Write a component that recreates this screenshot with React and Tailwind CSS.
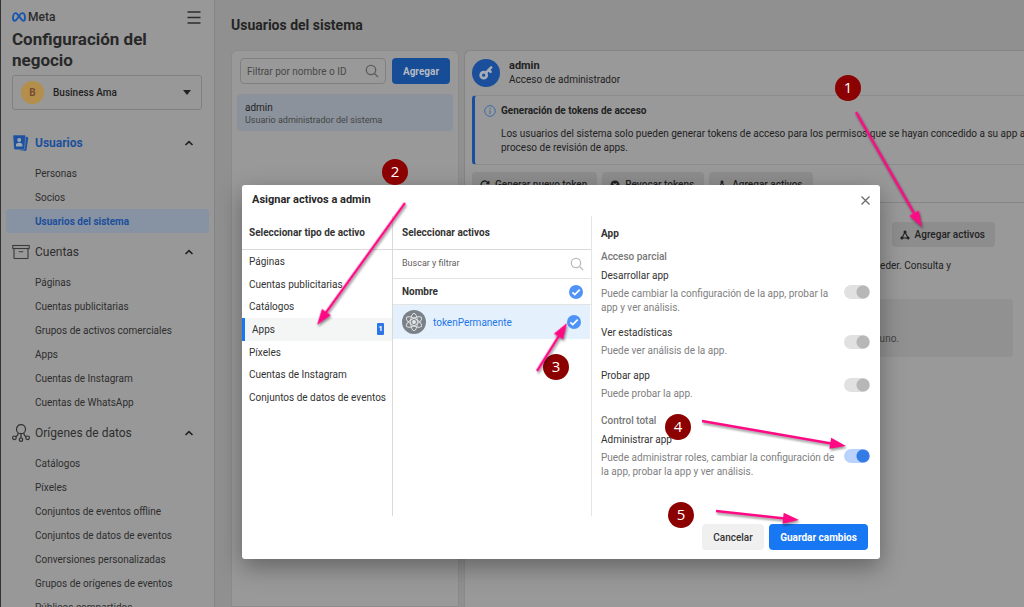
const MODAL_SHADOW = 'shadow-[0_8px_24px_rgba(0,0,0,0.35)]';

function MetaLogo() {
  return (
    <svg viewBox="0 0 14 10" className="h-[10px] w-[14px]" fill="none" stroke="#1a56b0" strokeWidth="1.9" aria-hidden="true">
      <path d="M7 4.6C5.8 2.4 4.8 1.1 3.6 1.1 2 1.1 1 3.6 1 6c0 1.6.6 2.7 1.7 2.7C4.2 8.7 5.4 6.4 7 3.900 8.200 2 9.200 1.100 10.400 1.100 12 1.100 13 3.600 13 6c0 1.600-.6 2.700-1.700 2.700C9.900 8.700 8.800 7 7 4.100" />
    </svg>
  );
}

function MenuIcon() {
  return (
    <svg viewBox="0 0 14 14" className="h-[14px] w-[14px]" stroke="#2c2c2c" strokeWidth="1.4" aria-hidden="true">
      <path d="M0.500 2h13M0.500 7.500h13M0.500 13h13" />
    </svg>
  );
}

function Chevron() {
  return (
    <svg viewBox="0 0 10 10" className="h-[10px] w-[10px]" fill="none" stroke="#222" strokeWidth="1.700" aria-hidden="true">
      <path d="M1.500 7 5 3.600 8.500 7" />
    </svg>
  );
}

function UsersIcon() {
  return (
    <svg viewBox="0 0 18 18" className="h-[18px] w-[18px]" aria-hidden="true">
      <path d="M13.500 2.800l1.700.3a1.200 1.200 0 0 1 1 1.400l-1.700 11.300a1.300 1.300 0 0 1-1.500 1.100L7 16z" fill="#1c52a0" />
      <path d="M2 1h10.500a1.200 1.200 0 0 1 1.200 1.400l-1.100 12.200a1.300 1.300 0 0 1-1.300 1.200H3.200A1.300 1.300 0 0 1 1.900 14.600L.9 2.300A1.200 1.200 0 0 1 2 1z" fill="#1c52a0" stroke="#989898" strokeWidth=".6" />
      <circle cx="7.200" cy="6" r="2" fill="#a0a6b0" />
      <path d="M4 12.500V11c0-1.300 1.300-2.200 3.200-2.200s3.200.9 3.200 2.200v1.500z" fill="#a0a6b0" />
    </svg>
  );
}

function BoxIcon() {
  return (
    <svg viewBox="0 0 18 16" className="h-[16px] w-[18px]" fill="none" stroke="#3a3a3a" strokeWidth="1.100" aria-hidden="true">
      <rect x=".8" y="1.500" width="16.400" height="3" />
      <path d="M2 4.500v9.400c0 .4.3.6.6.6h12.800c.3 0 .6-.2.6-.6V4.500M6.800 7.700h4.400" />
    </svg>
  );
}

function SourcesIcon() {
  return (
    <svg viewBox="0 0 18 18" className="h-[18px] w-[18px]" fill="none" stroke="#303030" strokeWidth="1.200" aria-hidden="true">
      <circle cx="9" cy="5.200" r="4.500" />
      <circle cx="2.400" cy="13.800" r="1.800" />
      <circle cx="9" cy="15.700" r="1.700" />
      <circle cx="15.600" cy="13.800" r="1.800" />
      <path d="M6.300 8.800C6 11.200 5 12.300 3.800 12.700M11.700 8.800c.3 2.400 1.300 3.500 2.500 3.900M9 9.700V14" />
    </svg>
  );
}

function SearchIcon({ className }) {
  return (
    <svg viewBox="0 0 14 14" className={'h-[14px] w-[14px] shrink-0 ' + className} fill="none" stroke="currentColor" strokeWidth="1.300" aria-hidden="true">
      <circle cx="6" cy="6" r="4.700" />
      <path d="M9.500 9.500 13 13" />
    </svg>
  );
}

function KeyIcon() {
  return (
    <svg viewBox="0 0 28 28" className="h-[28px] w-[28px] shrink-0" aria-hidden="true">
      <circle cx="14" cy="14" r="14" fill="#1b4f9c" />
      <circle cx="11.700" cy="16.200" r="3" fill="none" stroke="#a8adb5" strokeWidth="2.700" />
      <path d="M14 13.700 19.200 8.400M16.800 11.200l1.800 1.600" stroke="#a8adb5" strokeWidth="2.500" strokeLinecap="round" />
    </svg>
  );
}

function InfoIcon() {
  return (
    <svg viewBox="0 0 12 12" className="h-[12px] w-[12px] shrink-0" fill="none" stroke="#3e6ba8" aria-hidden="true">
      <circle cx="6" cy="6" r="5.300" strokeWidth="1" />
      <path d="M6 5.200V9M6 3v1.200" strokeWidth="1.100" />
    </svg>
  );
}

function AssetsIcon() {
  return (
    <svg viewBox="0 0 10 10" className="h-[10px] w-[10px]" fill="#222" stroke="#222" aria-hidden="true">
      <path d="M5 2 2 8h6z" fill="none" strokeWidth="1.100" />
      <circle cx="5" cy="2" r="1.100" />
      <circle cx="1.900" cy="8" r="1.100" />
      <circle cx="8.100" cy="8" r="1.100" />
    </svg>
  );
}

function RefreshIcon() {
  return (
    <svg viewBox="0 0 10 10" className="h-[10px] w-[10px]" fill="none" stroke="#222" strokeWidth="1.400" aria-hidden="true">
      <path d="M8.500 6.500A3.900 3.900 0 1 1 8.300 3M8.800 1v2.500H6.300" />
    </svg>
  );
}

function RevokeIcon() {
  return (
    <svg viewBox="0 0 10 10" className="h-[10px] w-[10px]" aria-hidden="true">
      <circle cx="5" cy="5" r="4.500" fill="#222" />
      <path d="M3.400 3.400l3.200 3.200M6.600 3.400 3.400 6.600" stroke="#999" strokeWidth="1.200" />
    </svg>
  );
}

function AtomIcon() {
  return (
    <svg viewBox="0 0 24 24" className="h-[24px] w-[24px] shrink-0" fill="none" aria-hidden="true">
      <circle cx="12" cy="12" r="12" fill="#7c8187" />
      <g stroke="#dcdfe2" strokeWidth="1">
        <ellipse cx="12" cy="12" rx="3.400" ry="8.700" />
        <ellipse cx="12" cy="12" rx="3.400" ry="8.700" transform="rotate(60 12 12)" />
        <ellipse cx="12" cy="12" rx="3.400" ry="8.700" transform="rotate(120 12 12)" />
      </g>
      <circle cx="12" cy="12" r="1.900" fill="#e8eaec" />
    </svg>
  );
}

const NAV = [
  {
    title: 'Usuarios', icon: UsersIcon, active: true, gap: 'mt-[21px]',
    items: ['Personas', 'Socios', 'Usuarios del sistema'],
  },
  {
    title: 'Cuentas', icon: BoxIcon, gap: 'mt-[7px]',
    items: ['Páginas', 'Cuentas publicitarias', 'Grupos de activos comerciales', 'Apps', 'Cuentas de Instagram', 'Cuentas de WhatsApp'],
  },
  {
    title: 'Orígenes de datos', icon: SourcesIcon, gap: 'mt-[7px]',
    items: ['Catálogos', 'Píxeles', 'Conjuntos de eventos offline', 'Conjuntos de datos de eventos', 'Conversiones personalizadas', 'Grupos de orígenes de eventos', 'Públicos compartidos'],
  },
];

function Sidebar() {
  return (
    <aside className="w-[215px] shrink-0 border-r border-l border-r-[#848484] border-l-[#333] bg-[#989898]">
      <header className="px-[11px] pt-[10px]">
        <div className="flex items-center justify-between pr-[2px]">
          <div className="flex items-center gap-[2px] text-[12px] leading-[14px] font-medium text-[#2b2b2b]">
            <MetaLogo />
            Meta
          </div>
          <button type="button" aria-label="Menú"><MenuIcon /></button>
        </div>
        <h1 className="mt-[5px] w-[160px] text-[17px] leading-[21px] font-bold text-[#282828]">Configuración del negocio</h1>
        <button type="button" className="mt-[4px] flex h-[35px] w-[190px] items-center rounded-[3px] border border-[#808080] pr-[10px] pl-[8px] text-[10px] font-medium text-[#222]">
          <span className="flex h-[23px] w-[23px] items-center justify-center rounded-full bg-[#b48f4c] font-bold text-[#7a4a34]">B</span>
          <span className="ml-[9px]">Business Ama</span>
          <svg viewBox="0 0 8 5" className="ml-auto h-[5px] w-[8px]" fill="#222" aria-hidden="true"><path d="M0 0h8L4 5z" /></svg>
        </button>
      </header>
      <nav className="px-[5px]">
        {NAV.map(({ title, icon: Icon, active, gap, items }) => (
          <section key={title} className={gap}>
            <button type="button" className={'flex h-[24px] w-full items-center pr-[15px] pl-[6px] text-[12px] ' + (active ? 'font-bold text-[#1b4f9c]' : 'text-[#2e2e2e]')}>
              <span className="w-[23px]"><Icon /></span>
              {title}
              <span className="ml-auto"><Chevron /></span>
            </button>
            <ul className="mt-[6px]">
              {items.map((item) => {
                const on = item === 'Usuarios del sistema';
                return (
                  <li key={item}>
                    <a href="#" className={'flex h-[24px] items-center rounded-[4px] pl-[29px] text-[10px] ' + (on ? 'bg-[#8792a2] font-bold text-[#1b4f9c]' : 'text-[#2e2e2e]')}>{item}</a>
                  </li>
                );
              })}
            </ul>
          </section>
        ))}
      </nav>
    </aside>
  );
}

function GreyButton({ icon, children }) {
  return (
    <button type="button" className="flex h-[25px] shrink-0 items-center gap-[5px] rounded-[4px] bg-[#8d8d8d] pr-[10px] pl-[8px] text-[10px] font-medium text-[#222]">
      {icon}
      {children}
    </button>
  );
}

function UserList() {
  return (
    <section className="w-[228px] shrink-0 rounded-t-[6px] border border-[#8b8b8b] bg-[#999]">
      <div className="flex gap-[6px] px-[8px] pt-[7px]">
        <label className="flex h-[26px] w-[146px] items-center rounded-[4px] border border-[#808080] pr-[6px] pl-[6px] text-[#5c5c5c]">
          <input type="text" aria-label="Filtrar por nombre o ID" placeholder="Filtrar por nombre o ID" className="min-w-0 flex-1 bg-transparent text-[10px] outline-none placeholder:text-[#484848]" />
          <SearchIcon className="" />
        </label>
        <button type="button" className="h-[26px] flex-1 rounded-[4px] bg-[#174c97] text-[10px] font-bold text-[#b5bac2]">Agregar</button>
      </div>
      <div className="mx-[5px] mt-[10px] h-[37px] rounded-[4px] bg-[#8b929b] px-[8px] pt-[7px]">
        <p className="text-[10px] leading-[13px] text-[#222]">admin</p>
        <p className="text-[9px] leading-[12px] text-[#444]">Usuario administrador del sistema</p>
      </div>
    </section>
  );
}

function UserDetail() {
  return (
    <div className="min-w-0 flex-1">
      <section className="h-[153px] rounded-tl-[6px] border border-r-0 border-[#858585] bg-[#999] pl-[7px]">
        <div className="flex items-center gap-[9px] pt-[7px]">
          <KeyIcon />
          <div className="text-[#222]">
            <h3 className="text-[11px] leading-[15px] font-bold">admin</h3>
            <p className="text-[10px] leading-[14px]">Acceso de administrador</p>
          </div>
        </div>
        <div className="mt-[8px] h-[70px] rounded-l-[4px] border-y border-l-3 border-y-[#8c8c8c] border-l-[#1b4f9c] pl-[9px]">
          <div className="flex items-center gap-[5px] pt-[8px] text-[10px] leading-[14px] font-bold text-[#222]">
            <InfoIcon />
            <span>Generación de tokens de acceso</span>
          </div>
          <p className="mt-[9px] pl-[17px] text-[10px] leading-[14px] whitespace-nowrap text-[#222]">
            Los usuarios del sistema solo pueden generar tokens de acceso para los permisos que se hayan concedido a su app a través del
            <br />
            proceso de revisión de apps.
          </p>
        </div>
        <div className="mt-[7px] flex gap-[5px]">
          <GreyButton icon={<RefreshIcon />}>Generar nuevo token</GreyButton>
          <GreyButton icon={<RevokeIcon />}>Revocar tokens</GreyButton>
          <GreyButton icon={<AssetsIcon />}>Agregar activos</GreyButton>
        </div>
      </section>
      <section className="h-full border-l border-[#8b8b8b] bg-[#999] pt-[19px] pr-[11px]">
        <div className="flex justify-end pr-[18px]">
          <GreyButton icon={<AssetsIcon />}>Agregar activos</GreyButton>
        </div>
        <p className="mt-[12px] pr-[62px] text-right text-[10px] leading-[14px] text-[#222]">a los que puede acceder. Consulta y</p>
        <div className="mt-[26px] ml-[8px] h-[58px] rounded-[4px] bg-[#919191] pt-[33px] pr-[114px] text-right text-[10px] leading-[14px] text-[#444]">Aún no se asignó ninguno.</div>
      </section>
    </div>
  );
}

const TYPES = ['Páginas', 'Cuentas publicitarias', 'Catálogos', 'Apps', 'Píxeles', 'Cuentas de Instagram', 'Conjuntos de datos de eventos'];

function RoundCheck({ label }) {
  return (
    <span className="grid h-[14px] w-[14px] shrink-0">
      <input type="checkbox" defaultChecked aria-label={label} className="col-start-1 row-start-1 h-[14px] w-[14px] appearance-none rounded-full bg-[#4f93f8]" />
      <svg viewBox="0 0 14 14" className="pointer-events-none col-start-1 row-start-1 h-[14px] w-[14px]" fill="none" stroke="#fff" strokeWidth="1.700" aria-hidden="true">
        <path d="M3.400 7.300 5.800 9.600 10.700 4.700" />
      </svg>
    </span>
  );
}

function Permission({ id, title, text, on, className }) {
  return (
    <div className={'flex items-center justify-between ' + className}>
      <label htmlFor={id} className="w-[236px] text-[10px]">
        <span className="block leading-[14px] text-[#333]">{title}</span>
        <span className="mt-[4px] block leading-[14px] text-[#808080]">{text}</span>
      </label>
      <input
        id={id}
        type="checkbox"
        role="switch"
        defaultChecked={on}
        className={'h-[14px] w-[26px] shrink-0 appearance-none rounded-full ' + (on
          ? 'bg-[radial-gradient(circle_at_19px_7px,#357be6_6px,#b9d3fa_7px)]'
          : 'bg-[radial-gradient(circle_at_19px_7px,#b7b7b7_6px,#e1e1e1_7px)]')}
      />
    </div>
  );
}

function Dialog() {
  return (
    <div role="dialog" aria-labelledby="dialog-title" className={'flex h-[374px] w-[638px] flex-col rounded-[3px] bg-white ' + MODAL_SHADOW}>
      <header className="flex h-[31px] shrink-0 items-center justify-between pr-[9px] pl-[10px]">
        <h2 id="dialog-title" className="text-[11px] font-bold text-[#282828]">Asignar activos a admin</h2>
        <button type="button" aria-label="Cerrar">
          <svg viewBox="0 0 11 11" className="h-[11px] w-[11px]" stroke="#666" strokeWidth="1.200" aria-hidden="true"><path d="M1.500 1.500l8 8M9.500 1.500l-8 8" /></svg>
        </button>
      </header>
      <div className="flex h-[300px] shrink-0">
        <section className="w-[151px] shrink-0 border-r border-[#dadada]">
          <h3 className="flex h-[34px] items-center border-b border-[#dadada] pl-[7px] text-[10px] font-bold text-[#333]">Seleccionar tipo de activo</h3>
          <ul className="grid h-[159px] auto-rows-fr text-[10px] text-[#333]">
            {TYPES.map((type) => (
              <li key={type}>
                <button type="button" className={'flex h-full w-full items-center whitespace-nowrap ' + (type === 'Apps' ? 'border-l-3 border-[#1877f2] bg-[#f4f6f6] pr-[8px] pl-[7px]' : 'pl-[7px]')}>
                  {type}
                  {type === 'Apps' && <span className="ml-auto flex h-[12px] w-[7px] items-center justify-center rounded-[1px] bg-[#2c76e6] text-[8px] font-bold text-white">1</span>}
                </button>
              </li>
            ))}
          </ul>
        </section>
        <section className="w-[199px] shrink-0 border-r border-[#e4e4e4]">
          <h3 className="flex h-[34px] items-center border-b border-[#dadada] pl-[9px] text-[10px] font-bold text-[#333]">Seleccionar activos</h3>
          <label className="flex h-[29px] items-center border-b border-[#e4e4e4] pr-[7px] pl-[9px]">
            <input type="text" aria-label="Buscar y filtrar" placeholder="Buscar y filtrar" className="min-w-0 flex-1 text-[9px] outline-none placeholder:text-[#606060]" />
            <SearchIcon className="text-[#bbb]" />
          </label>
          <div className="flex h-[26px] items-center justify-between border-b border-[#e4e4e4] pr-[8px] pl-[9px] text-[10px] font-bold text-[#333]">
            Nombre
            <RoundCheck label="Seleccionar todo" />
          </div>
          <div className="mr-[1px] flex h-[34px] items-center bg-[#e5f0fd] pr-[9px] pl-[9px] text-[10px] text-[#2176ea]">
            <AtomIcon />
            <span className="mr-auto ml-[7px]">tokenPermanente</span>
            <RoundCheck label="tokenPermanente" />
          </div>
        </section>
        <section className="flex-1 pr-[10px] pl-[9px]">
          <h3 className="flex h-[34px] items-center text-[10px] font-bold text-[#333]">App</h3>
          <h4 className="text-[10px] leading-[14px] font-medium text-[#777]">Acceso parcial</h4>
          <Permission id="p-dev" className="mt-[5px]" title="Desarrollar app" text="Puede cambiar la configuración de la app, probar la app y ver análisis." />
          <Permission id="p-stats" className="mt-[11px]" title="Ver estadísticas" text="Puede ver análisis de la app." />
          <Permission id="p-test" className="mt-[11px]" title="Probar app" text="Puede probar la app." />
          <h4 className="mt-[13px] text-[10px] leading-[14px] font-medium text-[#777]">Control total</h4>
          <Permission id="p-admin" on className="mt-[5px]" title="Administrar app" text="Puede administrar roles, cambiar la configuración de la app, probar la app y ver análisis." />
        </section>
      </div>
      <footer className="flex flex-1 justify-end gap-[5px] pt-[8px] pr-[12px]">
        <button type="button" className="h-[26px] w-[62px] rounded-[4px] bg-[#f0f0f0] text-[10px] font-medium text-[#333]">Cancelar</button>
        <button type="button" className="h-[26px] w-[99px] rounded-[4px] bg-[#1877f2] text-[10px] font-bold text-white">Guardar cambios</button>
      </footer>
    </div>
  );
}

const MARKS = [
  { n: 1, x: 848, y: 88 },
  { n: 2, x: 395, y: 172 },
  { n: 3, x: 556, y: 367 },
  { n: 4, x: 678, y: 427 },
  { n: 5, x: 681, y: 515 },
];

const ARROWS = [
  [856, 112, 922, 227],
  [405, 203, 317, 325],
  [537, 371, 567, 323],
  [702, 421, 846, 446],
  [716, 511, 799, 520],
];

function Arrow({ points: [x1, y1, x2, y2] }) {
  const length = Math.hypot(x2 - x1, y2 - y1);
  const angle = (Math.atan2(y2 - y1, x2 - x1) * 180) / Math.PI;
  return (
    <g transform={`translate(${x1} ${y1}) rotate(${angle})`}>
      <path d={`M0 0H${length - 12}`} stroke="#ff0a84" strokeWidth="2.400" />
      <path d={`M${length} 0l-16 -5.500v11z`} fill="#ff0a84" />
    </g>
  );
}

function Annotations() {
  return (
    <svg viewBox="0 0 1024 607" className="pointer-events-none absolute top-0 left-0 h-[607px] w-[1024px] font-['Open_Sans',sans-serif]">
      {MARKS.map(({ n, x, y }) => (
        <g key={n}>
          <circle cx={x} cy={y} r="13" fill="#8b0000" />
          <text x={x} y={y + 5} textAnchor="middle" fontSize="15" fill="#fff">{n}</text>
        </g>
      ))}
      <g className="drop-shadow-[1px_2px_1px_rgba(0,0,0,0.4)]">
        {ARROWS.map((points) => <Arrow key={points[0]} points={points} />)}
      </g>
    </svg>
  );
}

export default function App() {
  return (
    <div className="relative flex h-screen overflow-hidden bg-[#909090] font-[Roboto,'Liberation_Sans',sans-serif]">
      <Sidebar />
      <main className="flex min-w-0 flex-1 flex-col pl-[16px]">
        <h2 className="pt-[16px] text-[14px] leading-[18px] font-bold text-[#242424]">Usuarios del sistema</h2>
        <div className="mt-[16px] flex flex-1 gap-[5px]">
          <UserList />
          <UserDetail />
        </div>
      </main>
      <div className="absolute inset-0 pt-[185px] pl-[242px]">
        <Dialog />
      </div>
      <Annotations />
    </div>
  );
}
